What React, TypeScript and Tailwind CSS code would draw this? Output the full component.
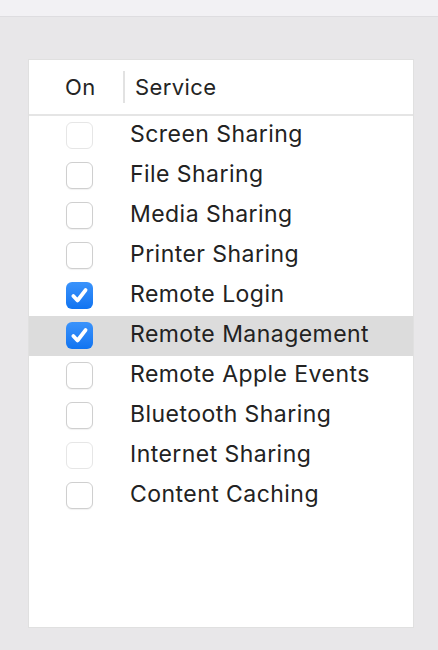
const services = [
  { name: "Screen Sharing", on: false, faint: true },
  { name: "File Sharing", on: false },
  { name: "Media Sharing", on: false },
  { name: "Printer Sharing", on: false },
  { name: "Remote Login", on: true },
  { name: "Remote Management", on: true, selected: true },
  { name: "Remote Apple Events", on: false },
  { name: "Bluetooth Sharing", on: false },
  { name: "Internet Sharing", on: false, faint: true },
  { name: "Content Caching", on: false },
];

function Checkbox({ on, faint }: { on: boolean; faint?: boolean }) {
  if (on) {
    return (
      <div className="w-[27px] h-[27px] rounded-[6px] bg-gradient-to-b from-[#3a93fb] to-[#0f74f1] flex items-center justify-center">
        <svg width="21" height="21" viewBox="0 0 16 16" fill="none">
          <path
            d="M3.3 8.4 L6.5 11.8 L12.6 3.9"
            stroke="white"
            strokeWidth="2.9"
            strokeLinecap="round"
            strokeLinejoin="round"
          />
        </svg>
      </div>
    );
  }
  return (
    <div
      className={
        faint
          ? "w-[27px] h-[27px] rounded-[6px] bg-white border border-[#e6e6e6]"
          : "w-[27px] h-[27px] rounded-[6px] bg-white border border-[#cfcfcf] shadow-[0_1px_1px_rgba(0,0,0,0.06)]"
      }
    />
  );
}

export default function App() {
  return (
    <div
      className="w-[438px] h-[650px] bg-[#e8e7e9] flex flex-col"
      style={{ fontFamily: "Inter, 'Noto Sans', sans-serif" }}
    >
      {/* top toolbar strip */}
      <div className="h-[17px] bg-[#f2f1f4] border-b border-[#dedde0]" />

      <div className="pt-[42px] pl-[28px]">
        <div className="w-[386px] h-[569px] bg-white border border-[#e0e0e0] flex flex-col">
          {/* header */}
          <div className="h-[56px] flex items-center border-b-2 border-[#e5e5e5] text-[22px] text-[#242424] tracking-[0.4px]">
            <div className="w-[94px] pl-[36px]">On</div>
            <div className="w-[2px] h-[32px] bg-[#e2e2e2]" />
            <div className="pl-[10px]">Service</div>
          </div>

          {services.map((s) => (
            <div
              key={s.name}
              className={
                s.selected
                  ? "h-[40px] flex items-center bg-[#dcdcdc]"
                  : "h-[40px] flex items-center"
              }
            >
              <div className="w-[101px] pl-[37px] pb-[2px]">
                <Checkbox on={s.on} faint={s.faint} />
              </div>
              <div className="text-[23px] text-[#222222] tracking-[0.45px] pb-[3px]">
                {s.name}
              </div>
            </div>
          ))}
        </div>
      </div>
    </div>
  );
}
